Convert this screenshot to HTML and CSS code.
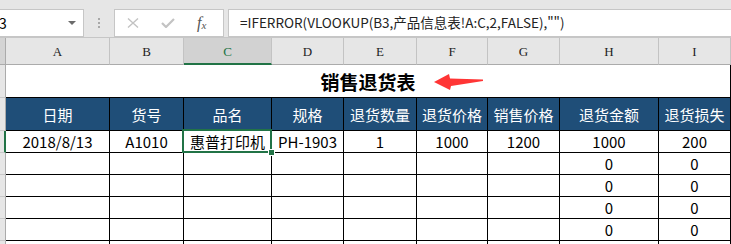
FILE: index.html
```html
<!DOCTYPE html>
<html lang="zh-CN">
<head>
    <meta charset="UTF-8">
    <title>销售退货表</title>
    <link rel="stylesheet" href="styles.css">
</head>
<body>
    <div class="toolbar">
        <div class="name-box">
            <span class="name-text">C3</span>
            <span class="name-drop"></span>
        </div>
        <div class="grip"><i></i><i></i><i></i></div>
        <div class="buttons">
            <svg class="btn-icon" width="12" height="10" viewBox="0 0 12 10">
                <path d="M1 0.5 L11 9.5 M11 0.5 L1 9.5" stroke="#c3c3c3" stroke-width="1.4" fill="none"/>
            </svg>
            <svg class="btn-icon" width="14" height="10" viewBox="0 0 14 10">
                <path d="M1 5 L5 9 L13 1" stroke="#c3c3c3" stroke-width="2.2" fill="none"/>
            </svg>
            <span class="fx">f<sub>x</sub></span>
        </div>
        <div class="formula">=IFERROR(VLOOKUP(B3,产品信息表!A:C,2,FALSE),"")</div>
    </div>

    <div class="sheet">
        <div class="row col-heads">
            <div class="corner"></div>
            <div class="col-head">A</div>
            <div class="col-head">B</div>
            <div class="col-head active">C</div>
            <div class="col-head">D</div>
            <div class="col-head">E</div>
            <div class="col-head">F</div>
            <div class="col-head">G</div>
            <div class="col-head">H</div>
            <div class="col-head">I</div>
            <div class="col-head"></div>
        </div>

        <div class="row title-row">
            <div class="row-head"></div>
            <div class="title-cell">
                销售退货表
                <svg class="arrow" width="58" height="24" viewBox="0 0 58 24">
                    <polygon points="4,12 19,4 20,8.5 53,9.5 53,11 21,16 20,20" fill="#ff3535"/>
                </svg>
            </div>
            <div class="cell blank"></div>
        </div>

        <div class="row head-row">
            <div class="row-head"></div>
            <div class="cell th">日期</div>
            <div class="cell th">货号</div>
            <div class="cell th">品名</div>
            <div class="cell th">规格</div>
            <div class="cell th">退货数量</div>
            <div class="cell th">退货价格</div>
            <div class="cell th">销售价格</div>
            <div class="cell th">退货金额</div>
            <div class="cell th">退货损失</div>
            <div class="cell blank"></div>
        </div>

        <div class="row data-row">
            <div class="row-head current"></div>
            <div class="cell">2018/8/13</div>
            <div class="cell">A1010</div>
            <div class="cell selected">惠普打印机<span class="sel-box"></span><span class="fill-handle"></span></div>
            <div class="cell">PH-1903</div>
            <div class="cell">1</div>
            <div class="cell">1000</div>
            <div class="cell">1200</div>
            <div class="cell">1000</div>
            <div class="cell">200</div>
            <div class="cell blank"></div>
        </div>
        <div class="row data-row">
            <div class="row-head"></div>
            <div class="cell"></div><div class="cell"></div><div class="cell"></div><div class="cell"></div>
            <div class="cell"></div><div class="cell"></div><div class="cell"></div>
            <div class="cell">0</div><div class="cell">0</div><div class="cell blank"></div>
        </div>
        <div class="row data-row">
            <div class="row-head"></div>
            <div class="cell"></div><div class="cell"></div><div class="cell"></div><div class="cell"></div>
            <div class="cell"></div><div class="cell"></div><div class="cell"></div>
            <div class="cell">0</div><div class="cell">0</div><div class="cell blank"></div>
        </div>
        <div class="row data-row">
            <div class="row-head"></div>
            <div class="cell"></div><div class="cell"></div><div class="cell"></div><div class="cell"></div>
            <div class="cell"></div><div class="cell"></div><div class="cell"></div>
            <div class="cell">0</div><div class="cell">0</div><div class="cell blank"></div>
        </div>
        <div class="row data-row">
            <div class="row-head"></div>
            <div class="cell"></div><div class="cell"></div><div class="cell"></div><div class="cell"></div>
            <div class="cell"></div><div class="cell"></div><div class="cell"></div>
            <div class="cell">0</div><div class="cell">0</div><div class="cell blank"></div>
        </div>
        <div class="row data-row">
            <div class="row-head"></div>
            <div class="cell"></div><div class="cell"></div><div class="cell"></div><div class="cell"></div>
            <div class="cell"></div><div class="cell"></div><div class="cell"></div>
            <div class="cell"></div><div class="cell"></div><div class="cell blank"></div>
        </div>
    </div>
</body>
</html>
```

FILE: styles.css
```css
* {
    box-sizing: border-box;
}

body {
    margin: 0;
    width: 731px;
    height: 244px;
    overflow: hidden;
    background-color: #e6e6e6;
    font-family: "Noto Sans CJK SC", sans-serif;
    color: #000;
}

/* formula bar */

.toolbar {
    height: 37px;
    display: flex;
    align-items: flex-start;
    padding-top: 9px;
}

.name-box {
    width: 85px;
    height: 28px;
    margin-left: -1px;
    background: white;
    border: 1px solid #c6c6c6;
    display: flex;
    align-items: center;
    overflow: hidden;
    font-size: 14px;
}

.name-text {
    margin-left: -10px;
    flex: 1;
}

.name-drop {
    width: 0;
    height: 0;
    border-left: 4px solid transparent;
    border-right: 4px solid transparent;
    border-top: 4px solid #6b6b6b;
    margin-right: 7px;
}

.grip {
    width: 30px;
    height: 28px;
    display: flex;
    flex-direction: column;
    align-items: center;
    justify-content: center;
    gap: 2px;
}

.grip i {
    width: 2px;
    height: 2px;
    background: #a8a8a8;
}

.buttons {
    width: 110px;
    height: 28px;
    background: white;
    border: 1px solid #c6c6c6;
    display: flex;
    align-items: center;
    padding-left: 12px;
    gap: 22px;
}

.btn-icon {
    display: block;
}

.fx {
    font-family: "Liberation Serif", serif;
    font-style: italic;
    font-size: 16px;
    color: #555;
    line-height: 1;
}

.fx sub {
    font-size: 11px;
    vertical-align: -1px;
}

.formula {
    flex: 1;
    height: 28px;
    margin-left: 4px;
    margin-right: -2px;
    background: white;
    border: 1px solid #c6c6c6;
    padding-left: 11px;
    font-size: 13.5px;
    line-height: 25px;
    color: #222;
    white-space: nowrap;
}

/* sheet grid */

.sheet {
    background: white;
}

.row {
    display: grid;
    grid-template-columns: 6px 104px 74px 88px 72px 73px 71px 72px 99px 72px 1fr;
}

.col-heads {
    height: 28px;
    border-top: 1px solid #c6c6c6;
    background: #e6e6e6;
}

.corner {
    background: #d4d4d4;
    border-right: 1px solid #ababab;
    border-bottom: 1px solid #ababab;
}

.col-head {
    border-right: 1px solid #c3c3c3;
    border-bottom: 1px solid #ababab;
    display: flex;
    align-items: center;
    justify-content: center;
    font-family: "Liberation Serif", serif;
    font-size: 13px;
    color: #222;
    padding-top: 2px;
}

.col-head.active {
    background: #d2d2d2;
    color: #217346;
    border-bottom: 2px solid #217346;
}

.row-head {
    background: #e6e6e6;
    border-right: 1px solid #ababab;
    border-bottom: 1px solid #c8c8c8;
}

.row-head.current {
    border-right: 2px solid #217346;
}

.title-row {
    height: 33px;
}

.title-cell {
    grid-column: 2 / 11;
    position: relative;
    border-right: 1px solid #000;
    border-bottom: 1px solid #000;
    display: flex;
    align-items: center;
    justify-content: center;
    font-size: 19px;
    font-weight: bold;
    padding-top: 1px;
}

.arrow {
    position: absolute;
    left: 424px;
    top: 5px;
}

.cell {
    border-right: 1px solid #000;
    border-bottom: 1px solid #000;
    display: flex;
    align-items: center;
    justify-content: center;
    font-size: 15px;
    white-space: nowrap;
}

.cell.blank {
    border-right: none;
}

.head-row {
    height: 33px;
}

.th {
    background: #1f4e78;
    color: white;
}

.head-row .blank {
    background: white;
}

.data-row {
    height: 22px;
}

.selected {
    position: relative;
}

.sel-box {
    position: absolute;
    left: -2px;
    top: -2px;
    right: -1px;
    bottom: -1px;
    border: 2px solid #217346;
}

.fill-handle {
    position: absolute;
    right: -4px;
    bottom: -4px;
    width: 7px;
    height: 7px;
    background: #217346;
    border: 1px solid white;
}
```
